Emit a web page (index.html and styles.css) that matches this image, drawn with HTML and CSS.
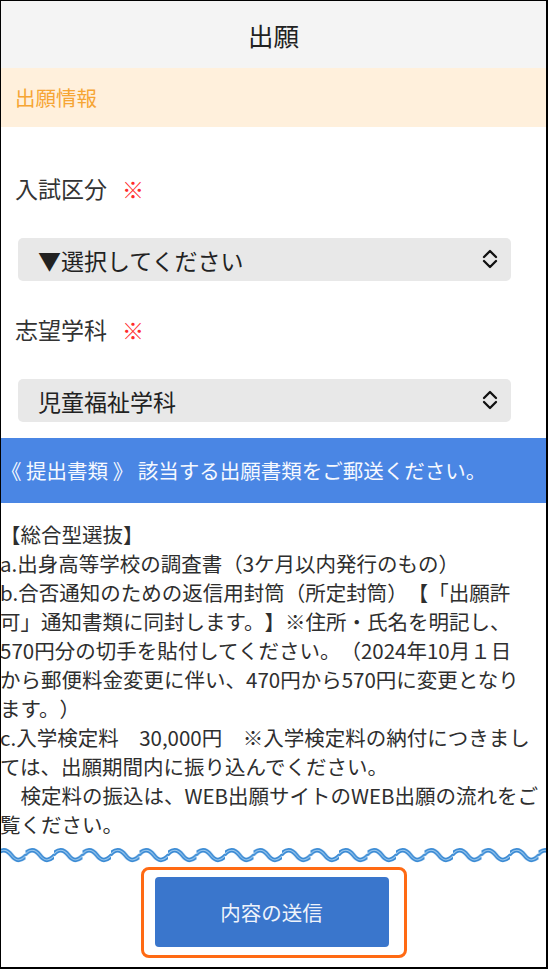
FILE: index.html
```html
<!DOCTYPE html>
<html lang="ja">
<head>
    <meta charset="UTF-8">
    <meta name="viewport" content="width=device-width, initial-scale=1.0">
    <title>出願</title>
    <link rel="stylesheet" href="styles.css">
</head>
<body>

    <div class="frame">
        <!-- Page header -->
        <header class="page-head">
            <h1>出願</h1>
        </header>

        <div class="section-title">出願情報</div>

        <!-- Form fields -->
        <div class="form-area">
            <div class="field">
                <label class="field-label" for="exam-type">入試区分<span class="req">※</span></label>
                <div class="select-box">
                    <select id="exam-type">
                        <option>▼選択してください</option>
                    </select>
                    <svg class="chevron" width="16" height="20" viewBox="0 0 16 20">
                        <path d="M2 8 L8 2 L14 8 M2 12 L8 18 L14 12" fill="none" stroke="#111" stroke-width="2.3" stroke-linecap="round" stroke-linejoin="round"/>
                    </svg>
                </div>
            </div>

            <div class="field">
                <label class="field-label" for="department">志望学科<span class="req">※</span></label>
                <div class="select-box">
                    <select id="department">
                        <option>児童福祉学科</option>
                    </select>
                    <svg class="chevron" width="16" height="20" viewBox="0 0 16 20">
                        <path d="M2 8 L8 2 L14 8 M2 12 L8 18 L14 12" fill="none" stroke="#111" stroke-width="2.3" stroke-linecap="round" stroke-linejoin="round"/>
                    </svg>
                </div>
            </div>
        </div>

        <div class="notice">《 提出書類 》 該当する出願書類をご郵送ください。</div>

        <!-- Documents list -->
        <p class="docs">【総合型選抜】<br>a.出身高等学校の調査書（3ケ月以内発行のもの）<br>b.合否通知のための返信用封筒（所定封筒）【「出願許<br>可」通知書類に同封します。】※住所・氏名を明記し、<br>570円分の切手を貼付してください。（2024年10月１日<br>から郵便料金変更に伴い、470円から570円に変更となり<br>ます。）<br>c.入学検定料　30,000円　※入学検定料の納付につきまし<br>ては、出願期間内に振り込んでください。<br>　検定料の振込は、WEB出願サイトのWEB出願の流れをご<br>覧ください。</p>

        <svg class="wave" width="100%" height="16">
            <defs>
                <pattern id="wave-tile" x="-4" y="0" width="28.5" height="16" patternUnits="userSpaceOnUse">
                    <path d="M-1 8 C3.75 1.5, 9.5 1.5, 14.25 8 S23.75 14.5, 29.5 8" fill="none" stroke="#3b8bd4" stroke-width="4.5"/>
                    <path d="M-1 8 C3.75 1.5, 9.5 1.5, 14.25 8 S23.75 14.5, 29.5 8" fill="none" stroke="#9fcaef" stroke-width="1"/>
                </pattern>
            </defs>
            <rect width="100%" height="16" fill="url(#wave-tile)"/>
        </svg>

        <div class="submit-area">
            <div class="highlight">
                <button class="submit-btn">内容の送信</button>
            </div>
        </div>
    </div>

</body>
</html>
```

FILE: styles.css
```css
html, body {
    margin: 0;
    padding: 0;
    background: #fff;
    font-family: "Noto Sans CJK JP", "Noto Sans", sans-serif;
    text-spacing-trim: space-all;
}

.frame {
    width: 548px;
    height: 969px;
    box-sizing: border-box;
    border-style: solid;
    border-color: #000;
    border-width: 1px 2px 2px 1px;
    overflow: hidden;
    background: #fff;
}

/* Header */
.page-head {
    height: 67px;
    background: #f4f4f4;
    display: flex;
    align-items: center;
    justify-content: center;
}

.page-head h1 {
    margin: 0;
    font-size: 25.5px;
    font-weight: 400;
    color: #222;
}

.section-title {
    height: 59px;
    line-height: 59px;
    background: #fff0dc;
    color: #f6a534;
    font-size: 20.5px;
    padding-left: 14px;
}

/* Form */
.form-area {
    padding: 46px 0 16px 0;
}

.field + .field {
    margin-top: 33px;
}

.field-label {
    display: block;
    height: 30px;
    line-height: 30px;
    padding-left: 14px;
    font-size: 23px;
    color: #333;
}

.req {
    color: #ff2b2b;
    font-size: 22px;
    margin-left: 15px;
}

.select-box {
    position: relative;
    margin: 35px 0 0 17px;
    width: 493px;
}

.select-box select {
    -webkit-appearance: none;
    appearance: none;
    display: block;
    width: 100%;
    height: 43px;
    border: none;
    border-radius: 5px;
    background: #e8e8e8;
    padding: 0 0 0 20px;
    font-family: "Noto Sans CJK JP", sans-serif;
    font-size: 23px;
    color: #222;
    outline: none;
    text-spacing-trim: space-all;
}

.chevron {
    position: absolute;
    right: 13px;
    top: 11px;
}

/* Blue notice bar */
.notice {
    height: 65px;
    line-height: 65px;
    background: #4a86e4;
    color: #f6f9ff;
    font-size: 20.5px;
    white-space: nowrap;
}

.docs {
    margin: 0 0 0 -1px;
    padding-top: 17px;
    font-size: 20.5px;
    line-height: 29px;
    color: #2e2e2e;
    white-space: nowrap;
}

.wave {
    display: block;
    margin-top: 8px;
}

/* Submit */
.submit-area {
    display: flex;
    justify-content: center;
    margin-top: 4px;
}

.highlight {
    border: 3px solid #ff6a13;
    border-radius: 8px;
    padding: 7px 15px 8px 11px;
}

.submit-btn {
    display: block;
    width: 234px;
    height: 70px;
    border: none;
    border-radius: 4px;
    background: #3a76cc;
    color: #eef3fb;
    font-family: "Noto Sans CJK JP", sans-serif;
    font-size: 20.5px;
    cursor: pointer;
}
```
